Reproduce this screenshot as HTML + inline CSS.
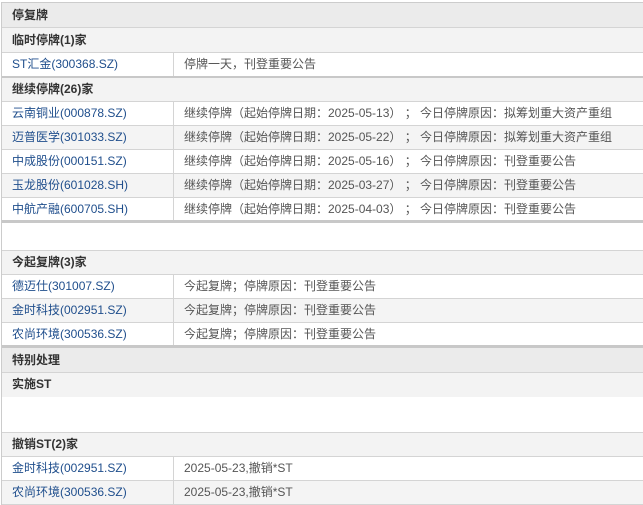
<!DOCTYPE html>
<html><head><meta charset="utf-8"><style>
body{margin:0;background:#fff;width:643px;height:503px;overflow:hidden;font-family:"Liberation Sans","Noto Sans CJK SC",sans-serif;font-size:12px;}
.w{position:absolute;left:1px;top:2px;width:642px;border-left:1px solid #ccc;border-top:1px solid #ccc;}
.r{height:23px;line-height:23px;border-bottom:1px solid #d4d4d4;display:flex;}
.h1{background:#ebebeb;font-weight:bold;color:#333;padding-left:10px;}
.h2{background:#f3f3f3;font-weight:bold;color:#333;padding-left:10px;}
.d{background:#fff}
.d.a{background:#f4f4f4}
.c1{width:161px;padding-left:10px;border-right:1px solid #d4d4d4;color:#1f4e8c}
.c2{padding-left:10px;color:#555;white-space:pre}
.e{height:27px;border-bottom:1px solid #d4d4d4}
</style></head><body><div class="w">
<div class="r h1" style="height:24px;line-height:25px">停复牌</div>
<div class="r h2" style="height:24px;line-height:25px">临时停牌(1)家</div>
<div class="r d" style="border-bottom:2px solid #c8c8c8"><div class="c1">ST汇金(300368.SZ)</div><div class="c2">停牌一天，刊登重要公告</div></div>
<div class="r h2">继续停牌(26)家</div>
<div class="r d"><div class="c1">云南铜业(000878.SZ)</div><div class="c2">继续停牌（起始停牌日期：2025-05-13） ； 今日停牌原因：拟筹划重大资产重组</div></div>
<div class="r d a"><div class="c1">迈普医学(301033.SZ)</div><div class="c2">继续停牌（起始停牌日期：2025-05-22） ； 今日停牌原因：拟筹划重大资产重组</div></div>
<div class="r d"><div class="c1">中成股份(000151.SZ)</div><div class="c2">继续停牌（起始停牌日期：2025-05-16） ； 今日停牌原因：刊登重要公告</div></div>
<div class="r d a"><div class="c1">玉龙股份(601028.SH)</div><div class="c2">继续停牌（起始停牌日期：2025-03-27） ； 今日停牌原因：刊登重要公告</div></div>
<div class="r d" style="border-bottom:3px solid #c8c8c8;height:22px"><div class="c1">中航产融(600705.SH)</div><div class="c2">继续停牌（起始停牌日期：2025-04-03） ； 今日停牌原因：刊登重要公告</div></div>
<div class="e"></div>
<div class="r h2">今起复牌(3)家</div>
<div class="r d"><div class="c1">德迈仕(301007.SZ)</div><div class="c2">今起复牌；停牌原因：刊登重要公告</div></div>
<div class="r d a"><div class="c1">金时科技(002951.SZ)</div><div class="c2">今起复牌；停牌原因：刊登重要公告</div></div>
<div class="r d" style="border-bottom:3px solid #c8c8c8;height:22px"><div class="c1">农尚环境(300536.SZ)</div><div class="c2">今起复牌；停牌原因：刊登重要公告</div></div>
<div class="r h1" style="height:24px;line-height:24px">特别处理</div>
<div class="r h2" style="border-bottom:none;height:24px">实施ST</div>
<div style="height:35px;border-bottom:1px solid #d4d4d4"></div>
<div class="r h2">撤销ST(2)家</div>
<div class="r d"><div class="c1">金时科技(002951.SZ)</div><div class="c2">2025-05-23,撤销*ST</div></div>
<div class="r d a"><div class="c1">农尚环境(300536.SZ)</div><div class="c2">2025-05-23,撤销*ST</div></div>
</div></body></html>
